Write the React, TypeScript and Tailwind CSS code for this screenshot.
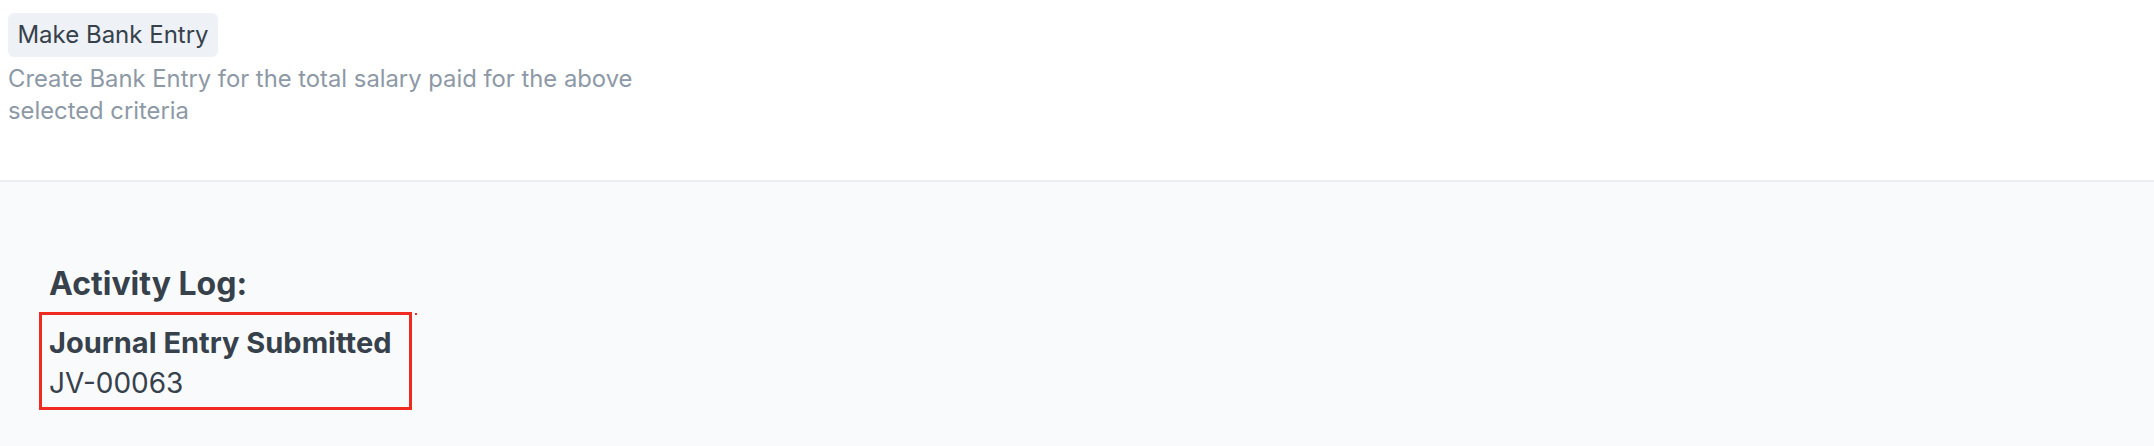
export default function App() {
  return (
    <div className="w-full min-h-[446px] flex flex-col font-['Inter',sans-serif] text-[#36414c]">
      {/* Payroll action section */}
      <div className="h-[180px] bg-white px-[8px] pt-[13px]">
        <button className="h-[44px] w-[210px] rounded-[6px] bg-[#eef1f5] text-[24px] leading-none text-[#36414c]">
          Make Bank Entry
        </button>
        <p className="mt-[6px] w-[640px] text-[23.8px] leading-[32px] text-[#8d99a6]">
          Create Bank Entry for the total salary paid for the above selected criteria
        </p>
      </div>

      {/* Activity log */}
      <div className="flex-1 h-[264px] border-t-2 border-[#ebeef2] bg-[#f9fafb] pl-[49px] pt-[84px]">
        <h3 className="text-[32px] leading-[36px] font-bold">Activity Log:</h3>
        <div className="relative mt-[10px] -ml-[10px] w-[373px] border-[3px] border-[#ef2a21] pl-[7px] pt-[8px] pb-[4px]">
          <div className="text-[29px] leading-[40px] font-bold">Journal Entry Submitted</div>
          <div className="text-[28px] leading-[40px]">JV-00063</div>
          <span className="absolute -top-[2px] -right-[8px] w-[2px] h-[2px] bg-[#ef2a21]" />
        </div>
      </div>
    </div>
  );
}
